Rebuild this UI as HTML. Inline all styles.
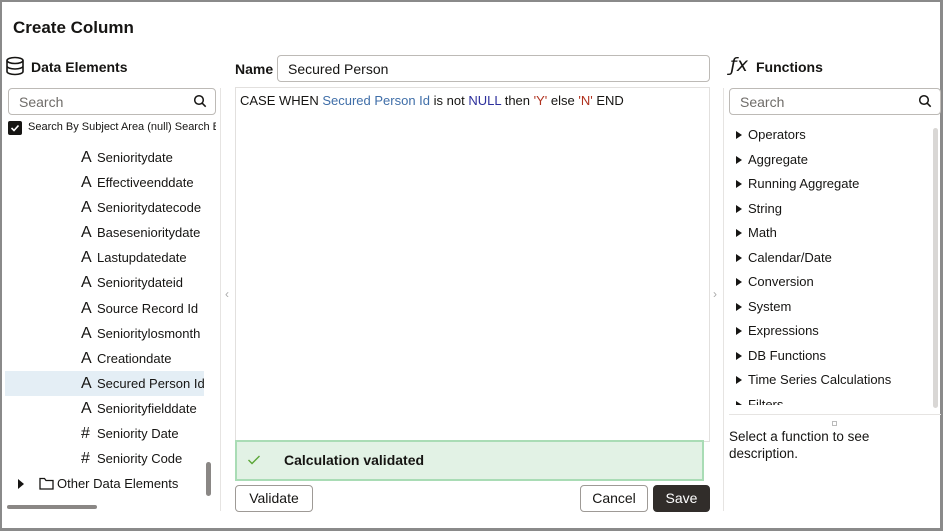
<!DOCTYPE html>
<html><head><style>
*{box-sizing:border-box;margin:0;padding:0}
body{width:944px;height:532px;overflow:hidden;background:#fff;font-family:"Liberation Sans",sans-serif;color:#161513;position:relative}
.frame{position:absolute;left:0;top:0;width:943px;height:531px;border:2px solid #8a8a8a;border-right-width:3px;border-bottom-width:3px}
.a{position:absolute;white-space:nowrap}
.t{font-size:13px}
.search{position:absolute;border:1px solid #bdbab6;border-radius:4px;height:27px;font-size:14px;color:#6f6c69;padding:5px 10px}
.row{position:absolute;left:81px;font-size:13px;height:25px;line-height:25px}
.row i{display:inline-block;width:16px;font-style:normal;font-size:16px;font-weight:300}
.fn{position:absolute;left:736px;font-size:13px}
.fn:before{content:"";display:inline-block;border-left:6px solid #161513;border-top:4.5px solid transparent;border-bottom:4.5px solid transparent;margin-right:6px}
.btn{position:absolute;border:1px solid #9e9a96;border-radius:4px;font-size:14px;text-align:center;line-height:25px;height:27px;background:#fff}
</style></head><body>
<div class="frame"></div>
<div class="a" style="left:13px;top:18px;font-size:17px;font-weight:bold">Create Column</div>
<svg class="a" style="left:5px;top:56px" width="20" height="20" viewBox="0 0 20 20" fill="none" stroke="#161513" stroke-width="1.6"><ellipse cx="10" cy="4.5" rx="8" ry="3"/><path d="M2 4.5v11c0 1.7 3.6 3 8 3s8-1.3 8-3v-11M2 10c0 1.7 3.6 3 8 3s8-1.3 8-3"/></svg>
<div class="a" style="left:31px;top:59px;font-size:14px;font-weight:bold">Data Elements</div>
<div class="search" style="left:8px;top:88px;width:208px">Search</div>
<svg class="a" style="left:193px;top:94px" width="14" height="14" viewBox="0 0 14 14" fill="none" stroke="#161513" stroke-width="1.5"><circle cx="6" cy="6" r="4.3"/><path d="M9.2 9.2l3.5 3.5"/></svg>
<div class="a" style="left:8px;top:121px;width:14px;height:14px;background:#161513;border-radius:2px"></div>
<svg class="a" style="left:9px;top:122px" width="12" height="12" viewBox="0 0 12 12" fill="none" stroke="#fff" stroke-width="1.6"><path d="M2.5 6l2.5 2.5 4.5-5"/></svg>
<div class="a" style="left:28px;top:121px;font-size:11px;width:188px;overflow:hidden">Search By Subject Area (null) Search By</div>
<div class="a" style="left:5px;top:371px;width:199px;height:25px;background:#e4eef5"></div>
<div class="row" style="top:145px"><i>A</i>Senioritydate</div>
<div class="row" style="top:170px"><i>A</i>Effectiveenddate</div>
<div class="row" style="top:195px"><i>A</i>Senioritydatecode</div>
<div class="row" style="top:220px"><i>A</i>Baseseniorit​ydate</div>
<div class="row" style="top:245px"><i>A</i>Lastupdatedate</div>
<div class="row" style="top:270px"><i>A</i>Senioritydateid</div>
<div class="row" style="top:296px"><i>A</i>Source Record Id</div>
<div class="row" style="top:321px"><i>A</i>Senioritylosmonth</div>
<div class="row" style="top:346px"><i>A</i>Creationdate</div>
<div class="row" style="top:371px"><i>A</i>Secured Person Id</div>
<div class="row" style="top:396px"><i>A</i>Seniorityfielddate</div>
<div class="row" style="top:421px"><i>#</i>Seniority Date</div>
<div class="row" style="top:446px"><i>#</i>Seniority Code</div>
<div class="a" style="left:18px;top:479px;border-left:6px solid #161513;border-top:5px solid transparent;border-bottom:5px solid transparent"></div>
<svg class="a" style="left:39px;top:477px" width="15" height="13" viewBox="0 0 15 13" fill="none" stroke="#161513" stroke-width="1.3"><path d="M1 1.5h4.5l1.5 2h7v8.5H1z"/></svg>
<div class="a t" style="left:57px;top:476px">Other Data Elements</div>
<div class="a" style="left:206px;top:462px;width:5px;height:34px;background:#8a8785;border-radius:3px"></div>
<div class="a" style="left:7px;top:505px;width:90px;height:4px;background:#8a8785;border-radius:2px"></div>
<div class="a" style="left:220px;top:88px;width:1px;height:423px;background:#e6e4e2"></div>

<div class="a" style="left:235px;top:61px;font-size:14px;font-weight:bold">Name</div>
<div class="search" style="left:277px;top:55px;width:433px;color:#161513">Secured Person</div>
<div class="a" style="left:235px;top:87px;width:475px;height:355px;border:1px solid #e2e0de"></div>
<div class="a t" style="left:240px;top:93px">CASE WHEN <span style="color:#3f6ea8">Secured Person Id</span> is not <span style="color:#2c2f9c">NULL</span> then <span style="color:#b0321f">'Y'</span> else <span style="color:#b0321f">'N'</span> END</div>
<div class="a" style="left:225px;top:287px;color:#aaa;font-size:12px">‹</div>
<div class="a" style="left:713px;top:287px;color:#aaa;font-size:12px">›</div>
<div class="a" style="left:235px;top:440px;width:469px;height:41px;background:#e2f2e5;border:2px solid #a9dcb5"></div>
<svg class="a" style="left:247px;top:454px" width="14" height="12" viewBox="0 0 14 12" fill="none" stroke="#5aa636" stroke-width="1.4"><path d="M1.5 6l3.5 3.5 7.5-7.5"/></svg>
<div class="a" style="left:284px;top:452px;font-size:14px;font-weight:bold">Calculation validated</div>
<div class="btn" style="left:235px;top:485px;width:78px">Validate</div>
<div class="btn" style="left:580px;top:485px;width:68px">Cancel</div>
<div class="btn" style="left:653px;top:485px;width:57px;background:#312d2a;border-color:#312d2a;color:#fff">Save</div>

<div class="a" style="left:723px;top:88px;width:1px;height:423px;background:#e6e4e2"></div>
<div class="a" style="left:730px;top:54px;font-size:19px;font-style:italic;font-family:'DejaVu Sans',sans-serif">ƒx</div>
<div class="a" style="left:756px;top:59px;font-size:14px;font-weight:bold">Functions</div>
<div class="search" style="left:729px;top:88px;width:212px">Search</div>
<svg class="a" style="left:918px;top:94px" width="14" height="14" viewBox="0 0 14 14" fill="none" stroke="#161513" stroke-width="1.5"><circle cx="6" cy="6" r="4.3"/><path d="M9.2 9.2l3.5 3.5"/></svg>
<div style="position:absolute;left:730px;top:118px;width:205px;height:287px;overflow:hidden">
<div class="fn" style="left:6px;top:9px">Operators</div>
<div class="fn" style="left:6px;top:34px">Aggregate</div>
<div class="fn" style="left:6px;top:58px">Running Aggregate</div>
<div class="fn" style="left:6px;top:83px">String</div>
<div class="fn" style="left:6px;top:107px">Math</div>
<div class="fn" style="left:6px;top:132px">Calendar/Date</div>
<div class="fn" style="left:6px;top:156px">Conversion</div>
<div class="fn" style="left:6px;top:181px">System</div>
<div class="fn" style="left:6px;top:205px">Expressions</div>
<div class="fn" style="left:6px;top:230px">DB Functions</div>
<div class="fn" style="left:6px;top:254px">Time Series Calculations</div>
<div class="fn" style="left:6px;top:279px">Filters</div>
</div>
<div class="a" style="left:933px;top:128px;width:5px;height:280px;background:#d9d7d5;border-radius:3px"></div>
<div class="a" style="left:729px;top:414px;width:212px;height:1px;background:#e6e4e2"></div>
<div class="a" style="left:832px;top:421px;width:5px;height:5px;border:1px solid #bbb"></div>
<div class="a" style="left:729px;top:428px;line-height:17px;font-size:13.5px">Select a function to see<br>description.</div>
</body></html>
